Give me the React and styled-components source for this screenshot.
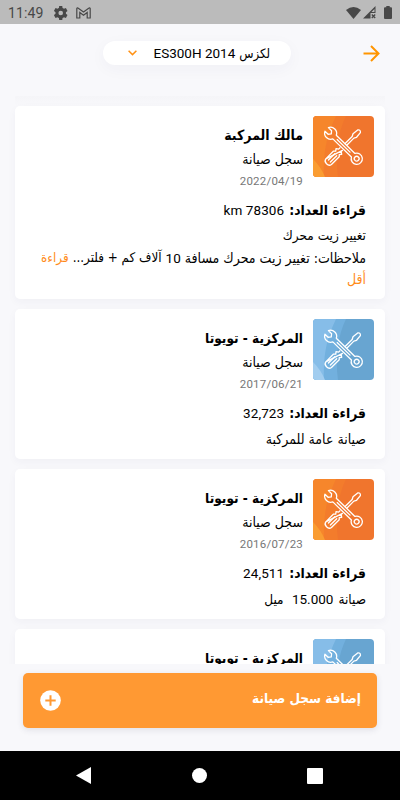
import React from 'react';
import styled, { createGlobalStyle } from 'styled-components';

const GlobalStyle = createGlobalStyle`
  * { box-sizing: border-box; }
  body {
    margin: 0;
    background: #f8f8fb;
    font-family: Roboto, 'DejaVu Sans', sans-serif;
    color: #000;
  }
`;

const Screen = styled.div`
  width: 400px;
  height: 800px;
  display: flex;
  flex-direction: column;
  overflow: hidden;
  background: #f8f8fb;
`;

const StatusBar = styled.div`
  height: 24px;
  flex: none;
  display: flex;
  align-items: center;
  justify-content: space-between;
  padding: 1px 8px 0;
  background: #bbb;
  color: #484848;
`;

const StatusGroup = styled.div`
  display: flex;
  align-items: center;
  gap: ${props => props.$gap}px;
`;

const Clock = styled.span`
  font-size: 14px;
  line-height: 22px;
  letter-spacing: 0.1px;
  margin-right: 3px;
`;

const BatteryIcon = styled.svg`
  margin-left: 5px;
`;

const Header = styled.div`
  height: 72px;
  flex: none;
  display: flex;
  align-items: flex-start;
  padding: 17px 19px 0 103px;
`;

const CarPicker = styled.button`
  width: 188px;
  height: 24px;
  border: 0;
  border-radius: 12px;
  background: #fff;
  box-shadow: 0 4px 16px rgba(60, 60, 90, 0.04);
  display: flex;
  align-items: center;
  justify-content: space-between;
  padding: 0 21px 0 25px;
  font-family: inherit;
  color: #000;
`;

const CarName = styled.span`
  display: flex;
  gap: 4px;
  align-items: center;
  white-space: nowrap;
`;

const BackButton = styled.div`
  margin-left: auto;
  height: 24px;
  display: flex;
  align-items: center;
`;

const Arabic = styled.span`
  display: inline-block;
  white-space: nowrap;
  font-family: 'DejaVu Sans', sans-serif;
  font-stretch: condensed;
  font-size: ${props => props.$size || 14}px;
  font-weight: ${props => (props.$bold ? 700 : 400)};
  color: ${props => props.$color || 'inherit'};
`;

const Latin = styled.span`
  display: inline-block;
  white-space: pre;
  direction: ltr;
  font-size: ${props => props.$size || 13.5}px;
  letter-spacing: ${props => props.$track || 0}px;
  color: ${props => props.$color || 'inherit'};
`;

const List = styled.div`
  height: 568px;
  flex: none;
  overflow: hidden;
  direction: rtl;
  display: flex;
  flex-direction: column;
  gap: 10px;
  padding: 0 15px;
`;

const ListEdge = styled.div`
  height: 10px;
  flex: none;
  margin-bottom: -10px;
  background: linear-gradient(#f5f5f8, #f8f8fb);
`;

const Card = styled.div`
  flex: none;
  height: ${props => props.$height}px;
  background: #fff;
  border-radius: 5px;
  box-shadow: 0 3px 8px rgba(60, 60, 90, 0.04);
  padding: 10px 11px 0;
`;

const CardHead = styled.div`
  display: flex;
  gap: 10px;
  height: 81px;
`;

const HeadText = styled.div`
  display: flex;
  flex-direction: column;
  align-items: flex-start;
  padding-top: 6px;
`;

const Line = styled.div`
  display: flex;
  align-items: center;
  white-space: nowrap;
  height: ${props => props.$height}px;
  gap: ${props => props.$gap || 0}px;
`;

const CardBody = styled.div`
  padding: 0 8px;
`;

const Footer = styled.div`
  height: 87px;
  flex: none;
  padding: 8.5px 23px 0 23px;
`;

const AddButton = styled.button`
  direction: rtl;
  width: 100%;
  height: 55px;
  border: 0;
  border-radius: 5px;
  background: #ff9933;
  box-shadow: 0 2px 6px rgba(60, 60, 90, 0.12);
  color: #fff;
  display: flex;
  align-items: center;
  justify-content: space-between;
  padding: 0 16px 0 17px;
`;

const AddLabel = styled.span`
  padding-bottom: 5px;
`;

const NavBar = styled.div`
  height: 49px;
  flex: none;
  background: #000;
  display: flex;
  align-items: center;
  justify-content: space-between;
  padding: 0 77px 0 76px;
`;

const Tile = styled.svg`
  flex: none;
`;

function Tools({ blue }) {
  return (
    <Tile width="61" height="61" viewBox="0 0 61 61">
      <clipPath id="tile"><rect width="61" height="61" rx="4" /></clipPath>
      <g clipPath="url(#tile)">
        <rect width="61" height="61" fill={blue ? '#68a5d1' : '#f0752d'} />
        <path d="M0 0H33C25 16 22 38 25 61H0Z" fill={blue ? '#72b0de' : '#f37c2c'} />
        <path d="M0 0H23C15 17 10 32 11 61H0Z" fill={blue ? '#86bde8' : '#f6862b'} />
        <path d="M0 43Q8 51 12 61H0Z" fill={blue ? '#a2cdef' : '#fa9d32'} />
      </g>
      <g fill="none" stroke="#fff" strokeWidth="1.3" strokeLinejoin="round" strokeLinecap="round">
        {/* screwdriver, from handle end to tip */}
        <g transform="translate(13.5 47.800) rotate(-45)">
          <path d="M3 -4H14L15.500 -2.500L17.500 -4L19 -1.800H20.800M20.800 1.800H19L17.500 4L15.500 2.500L14 4H3Q0 3.500 0 0Q0 -3.500 3 -4Z" />
          <path d="M4 -1.300H13M4 1.500H13" />
          <path d="M27.500 -1.200H37.500L40 -2.500L46 -1.900Q48.500 0 46 1.900L40 2.500L37.500 1.200H27.500" />
        </g>
        {/* wrench, open end to ring end */}
        <g transform="translate(17.700 17.300) rotate(44.300)">
          <path d="M-5.600 -2.500L-1.200 -2.500L.8 0L-1.200 2.500L-5.600 2.500A6.100 6.100 0 0 0 5.400 2.500H31.400A5.600 5.600 0 1 0 31.400 -2.500H5.400A6.100 6.100 0 0 0 -5.600 -2.500Z" />
          <path d="M9 0H27" />
          <circle cx="36.300" cy="0" r="2.400" />
        </g>
      </g>
    </Tile>
  );
}

const records = [
  { id: 1, owner: 'مالك المركبة', date: '2022/04/19', reading: '78306 km', height: 193, full: true },
  { id: 2, owner: 'المركزية - تويوتا', date: '2017/06/21', reading: '32,723', height: 150, blue: true, note: 'صيانة عامة للمركبة' },
  { id: 3, owner: 'المركزية - تويوتا', date: '2016/07/23', reading: '24,511', height: 150, service: true },
  { id: 4, owner: 'المركزية - تويوتا', height: 150, blue: true },
];

function Reading({ value }) {
  const [num, unit] = value.split(' ');
  return <Latin $track={0.1}>{unit ? unit + ' ' + num : num}</Latin>;
}

function Notes({ record }) {
  if (record.full) {
    return (
      <>
        <Line $height={24}><Arabic $size={13.5}>تغيير زيت محرك</Arabic></Line>
        <Line $height={21} $gap={4}>
          <Arabic>ملاحظات: تغيير زيت محرك مسافة</Arabic>
          <Latin>10</Latin>
          <Arabic $size={13.3}>آلاف كم + فلتر...</Arabic>
          <Arabic $size={13.3} $color="#ff8c1a">قراءة</Arabic>
        </Line>
        <Line $height={21}><Arabic $color="#ff8c1a">أقل</Arabic></Line>
      </>
    );
  }
  if (record.service) {
    return (
      <Line $height={26} $gap={5}>
        <Arabic $size={13.5}>صيانة</Arabic>
        <Latin> 15.000</Latin>
        <Arabic $size={13.5}>ميل</Arabic>
      </Line>
    );
  }
  return <Line $height={26}><Arabic>{record.note}</Arabic></Line>;
}

function RecordCard({ record }) {
  return (
    <Card $height={record.height}>
      <CardHead>
        <Tools blue={record.blue} />
        <HeadText>
          <Line $height={25}>
            <Arabic $bold $size={record.full ? 14 : 13.5}>{record.owner}</Arabic>
          </Line>
          {record.date && (
            <>
              <Line $height={24}><Arabic>سجل صيانة</Arabic></Line>
              <Line $height={19}><Latin $size={11.5} $track={0.2} $color="#777">{record.date}</Latin></Line>
            </>
          )}
        </HeadText>
      </CardHead>
      {record.reading && (
        <CardBody>
          <Line $height={26} $gap={5}>
            <Arabic $bold $size={13.8}>قراءة العداد:</Arabic>
            <Reading value={record.reading} />
          </Line>
          <Notes record={record} />
        </CardBody>
      )}
    </Card>
  );
}

export default function App() {
  return (
    <>
      <GlobalStyle />
      <Screen>
        <StatusBar>
          <StatusGroup $gap={8}>
            <Clock>11:49</Clock>
            <svg width="14" height="14" viewBox="3 2 20 20" fill="#484848">
              <path fillRule="evenodd" d="M20 13.200a8 8 0 0 0 0-2.400l2.300-1.800-2.300-4-2.800 1.100a8 8 0 0 0-2-1.100L14.800 2h-4.400L10 5a8 8 0 0 0-2 1.100L5.200 5l-2.300 4 2.300 1.800a8 8 0 0 0 0 2.400L2.900 15l2.300 4L8 17.900a8 8 0 0 0 2 1.100l.4 3h4.400l.4-3a8 8 0 0 0 2-1.100L20 19l2.300-4zM12.600 15.300a3.300 3.300 0 1 1 0-6.600 3.300 3.300 0 0 1 0 6.600z" />
            </svg>
            <svg width="15" height="12" viewBox="0 0 15 12" fill="none" stroke="#484848">
              <path d="M.8 1.500Q1.300.500 2.300 1.200L7.500 5L12.700 1.200Q13.700.500 14.200 1.500V11H11.200V5.500L7.500 8.200L3.800 5.500V11H.8Z" strokeWidth="1.200" />
            </svg>
          </StatusGroup>
          <StatusGroup $gap={2}>
            <svg width="15" height="12" viewBox="0 0 15 12"><path d="M0 3Q7.500-3 15 3L7.500 12Z" fill="#484848" /></svg>
            <svg width="14" height="13" viewBox="0 0 14 13">
              <path d="M12.500 0V7H7.500V12.500H0Z" fill="#484848" />
              <path d="M8.800 8.500L12.200 12M12.200 8.500L8.800 12" stroke="#484848" strokeWidth="1.300" />
              <path d="M8.500 6L11.500 3V6Z" fill="#bbb" />
            </svg>
            <BatteryIcon width="8" height="14" viewBox="0 0 8 14">
              <path d="M2.300 0H5.700V1.300H7Q8 1.300 8 2.300V12Q8 13 7 13H1Q0 13 0 12V2.300Q0 1.300 1 1.300H2.300Z" fill="#484848" />
            </BatteryIcon>
          </StatusGroup>
        </StatusBar>
        <Header>
          <CarPicker>
            <svg width="9" height="6" viewBox="0 0 9 6" fill="none" stroke="#ff9114" strokeWidth="1.500">
              <path d="M.6 .8L4.500 4.600L8.400 .8" />
            </svg>
            <CarName>
              <Latin>ES300H 2014</Latin>
              <Arabic $size={13}>لكزس</Arabic>
            </CarName>
          </CarPicker>
          <BackButton>
            <svg width="18" height="17" viewBox="0 0 18 17" fill="none" stroke="#ff9500" strokeWidth="2">
              <path d="M.5 8.500H16M8 1L15.500 8.500L8 16" />
            </svg>
          </BackButton>
        </Header>
        <List>
          <ListEdge />
          {records.map(record => <RecordCard key={record.id} record={record} />)}
        </List>
        <Footer>
          <AddButton>
            <AddLabel><Arabic $bold $size={13.5}>إضافة سجل صيانة</Arabic></AddLabel>
            <svg width="21" height="21" viewBox="0 0 21 21">
              <circle cx="10.500" cy="10.500" r="10.300" fill="#fff" />
              <path d="M5.300 10.500H15.700M10.500 5.300V15.700" stroke="#ff9933" strokeWidth="2" />
            </svg>
          </AddButton>
        </Footer>
        <NavBar>
          <svg width="15" height="17" viewBox="0 0 15 17"><path d="M15 0V17L0 8.500Z" fill="#fff" /></svg>
          <svg width="15" height="15" viewBox="0 0 15 15"><circle cx="7.500" cy="7.500" r="7.500" fill="#fff" /></svg>
          <svg width="16" height="16" viewBox="0 0 16 16"><rect width="16" height="16" rx="1" fill="#fff" /></svg>
        </NavBar>
      </Screen>
    </>
  );
}
